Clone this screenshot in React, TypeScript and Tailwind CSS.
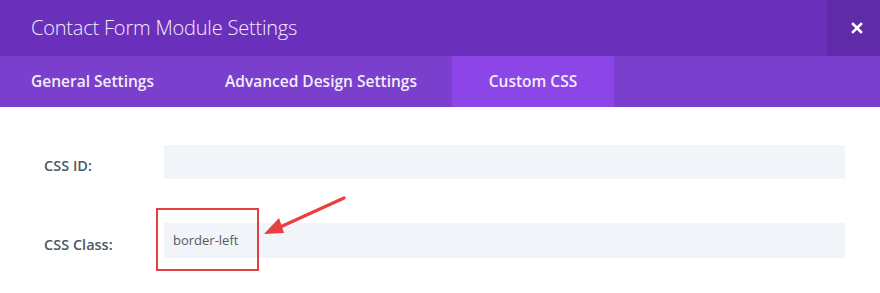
import React from "react";

export default function App() {
  return (
    <div className="w-[880px] h-[293px] bg-white overflow-hidden relative" style={{ fontFamily: '"Open Sans", sans-serif' }}>
      <div className="flex h-[56px] bg-[#6a30bb]">
        <div className="flex-1 flex items-center pl-[31px] text-[20px] font-light text-[#f3ecfb] tracking-[-0.2px]">
          Contact Form Module Settings
        </div>
        <div className="w-[53px] flex items-center justify-center pl-[7px] bg-[#5f2ba8]">
          <svg width="12" height="12" viewBox="0 0 12 12">
            <path d="M2 2L10 10M10 2L2 10" stroke="#ffffff" strokeWidth="2.6" strokeLinecap="square" />
          </svg>
        </div>
      </div>
      <div className="flex h-[51px] bg-[#7a40cd] text-[15.5px] font-semibold text-[#f3ecfb]">
        <div className="flex items-center pl-[31px] w-[225px]">General Settings</div>
        <div className="flex items-center w-[227px]">Advanced Design Settings</div>
        <div className="flex items-center justify-center w-[162px] bg-[#8c45e6]">Custom CSS</div>
      </div>
      <div className="flex flex-col pt-[38px] pl-[44px] pr-[35px] gap-[44px]">
        <div className="flex items-center h-[34px]">
          <div className="w-[120px] text-[14.5px] font-semibold text-[#4c5866] pt-[8px]">CSS ID:</div>
          <div className="flex-1 h-[34px] bg-[#f1f5f9]" />
        </div>
        <div className="flex items-center h-[35px]">
          <div className="w-[120px] text-[14.5px] font-semibold text-[#4c5866] pt-[9px]">CSS Class:</div>
          <div className="flex-1 h-[35px] bg-[#f1f5f9] flex items-center pl-[9px] text-[13px] text-[#5a5a5a]">border-left</div>
        </div>
      </div>
      <div className="absolute left-[156px] top-[208px] w-[103px] h-[63px] border-2 border-[#e2403e]" />
      <svg className="absolute left-0 top-0" width="880" height="293">
        <line x1="344" y1="198" x2="278" y2="228" stroke="#e8403f" strokeWidth="3.2" strokeLinecap="round" />
        <polygon points="264,234 279,218 284,233" fill="#e8403f" />
      </svg>
    </div>
  );
}
